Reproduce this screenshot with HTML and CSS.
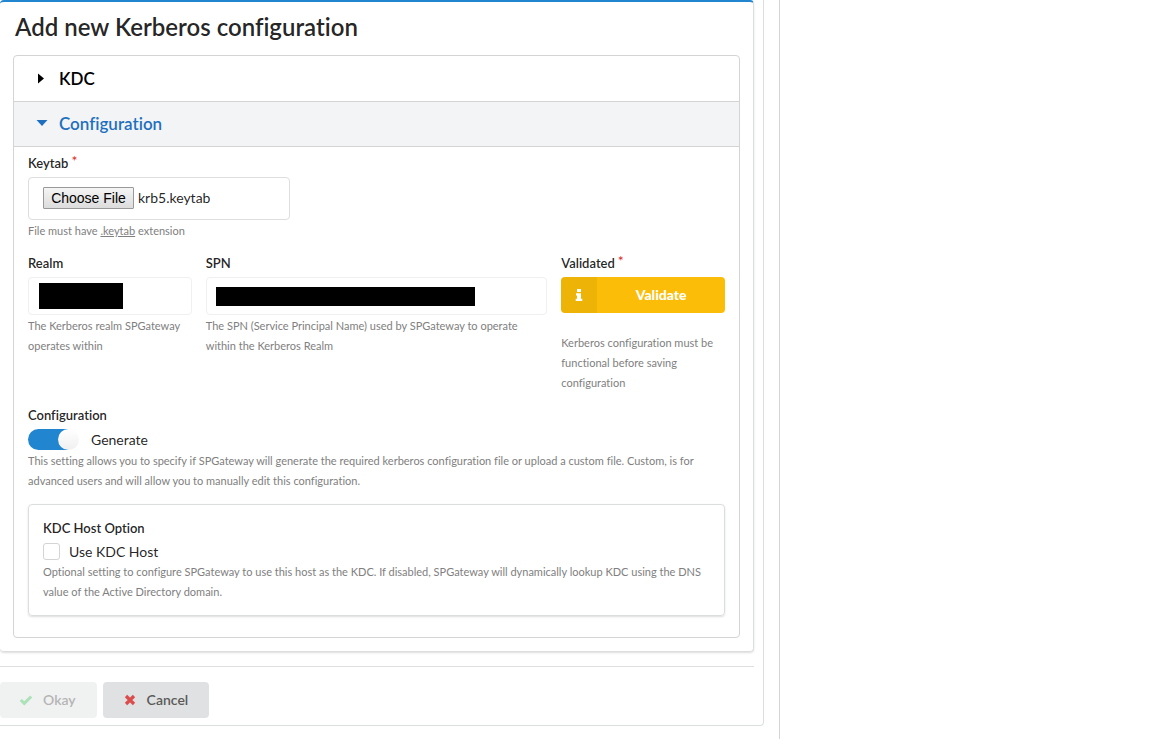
FILE: index.html
```html
<!DOCTYPE html>
<html lang="en">
<head>
<meta charset="utf-8">
<title>Add new Kerberos configuration</title>
<link rel="stylesheet" href="styles.css">
</head>
<body>
<div class="page">
  <main class="pane">
    <form class="outer">
      <section class="card">
        <h1 class="title">Add new Kerberos configuration</h1>
        <div class="accordion">
          <button type="button" class="acc-head">
            <svg class="caret" viewBox="0 0 12 12" aria-hidden="true"><path d="M2 0.5L8 5.5L2 10.5Z" fill="currentColor"/></svg>
            KDC
          </button>
          <button type="button" class="acc-head active" aria-expanded="true">
            <svg class="caret" viewBox="0 0 12 12" aria-hidden="true"><path d="M0.5 3H11.5L6 9Z" fill="currentColor"/></svg>
            Configuration
          </button>
          <div class="acc-body">
            <div class="field">
              <label class="label required" for="keytab">Keytab</label>
              <div class="file-box">
                <input class="file" type="file" id="keytab" accept=".keytab">
                <span class="file-name">krb5.keytab</span>
              </div>
              <p class="help">File must have <u>.keytab</u> extension</p>
            </div>

            <div class="columns">
              <div class="col">
                <label class="label" for="realm">Realm</label>
                <div class="masked">
                  <input class="text" type="text" id="realm" disabled>
                  <span class="mask mask-realm"></span>
                </div>
                <p class="help">The Kerberos realm SPGateway operates within</p>
              </div>
              <div class="col wide">
                <label class="label" for="spn">SPN</label>
                <div class="masked">
                  <input class="text" type="text" id="spn" disabled>
                  <span class="mask mask-spn"></span>
                </div>
                <p class="help">The SPN (Service Principal Name) used by SPGateway to operate within the Kerberos Realm</p>
              </div>
              <div class="col">
                <label class="label required" for="validate">Validated</label>
                <button type="button" class="validate" id="validate">
                  <span class="validate-icon"><svg viewBox="0 0 8 12" aria-hidden="true"><path d="M2 0H6V3H2ZM1 4.2H6V9.8H7.3V12H0.7V9.8H2V6.4H1Z" fill="currentColor"/></svg></span>
                  <span class="validate-text">Validate</span>
                </button>
                <p class="help spaced">Kerberos configuration must be functional before saving configuration</p>
              </div>
            </div>

            <div class="field">
              <span class="label">Configuration</span>
              <div class="choice">
                <input class="toggle" type="checkbox" id="generate" checked>
                <label class="choice-label" for="generate">Generate</label>
              </div>
              <p class="help">This setting allows you to specify if SPGateway will generate the required kerberos configuration file or upload a custom file. Custom, is for advanced users and will allow you to manually edit this configuration.</p>
            </div>

            <div class="option">
              <span class="label">KDC Host Option</span>
              <div class="choice small">
                <input class="check" type="checkbox" id="host">
                <label class="choice-label" for="host">Use KDC Host</label>
              </div>
              <p class="help">Optional setting to configure SPGateway to use this host as the KDC. If disabled, SPGateway will dynamically lookup KDC using the DNS value of the Active Directory domain.</p>
            </div>
          </div>
        </div>
      </section>
      <div class="actions">
        <button type="submit" class="btn okay" disabled>
          <svg viewBox="0 0 14 12" aria-hidden="true"><path d="M1.8 6L5.3 9.4L12.2 2.5" fill="none" stroke="#21ba45" stroke-width="3"/></svg>
          Okay
        </button>
        <button type="button" class="btn">
          <svg viewBox="0 0 14 12" aria-hidden="true"><path d="M3 2L11 10M11 2L3 10" fill="none" stroke="#db2828" stroke-width="3.2"/></svg>
          Cancel
        </button>
      </div>
    </form>
  </main>
</div>
</body>
</html>
```
FILE: styles.css
```css
* { box-sizing: border-box; }

body {
  margin: 0;
  background: #fff;
  color: rgba(0, 0, 0, 0.87);
  font: 14px/20px Lato, "Liberation Sans", sans-serif;
  font-variant-ligatures: none;
}

button, input { font-family: inherit; }

.page {
  display: grid;
  grid-template-columns: 65fr 31fr;
  min-height: 100vh;
}

.pane {
  border-right: 1px solid #d4d4d5;
  padding-right: 15px;
}

.outer {
  border: solid #dcdddd;
  border-width: 0 1px 1px 0;
  border-radius: 0 0 4px 0;
  padding: 0 9px 7px 0;
}

.card {
  border: 1px solid #dcdddd;
  border-left: 0;
  border-top: 2px solid #2185d0;
  border-radius: 4px;
  box-shadow: 0 1px 2px rgba(34, 36, 38, 0.15);
  padding: 10px 13px 13px;
}

.title {
  margin: 0 0 13px 2px;
  font-size: 24px;
  line-height: 30px;
  font-weight: 600;
}

.accordion {
  border: 1px solid #d4d4d5;
  border-radius: 4px;
}

.acc-head {
  display: flex;
  align-items: center;
  gap: 11px;
  width: 100%;
  height: 45px;
  padding: 0 22px;
  border: 0;
  border-radius: 4px 4px 0 0;
  background: none;
  color: #000;
  font-size: 17px;
  font-weight: 600;
  font-variant-ligatures: none;
  text-align: left;
}

.acc-head.active {
  height: 46px;
  border: solid #d4d4d5;
  border-width: 1px 0;
  border-radius: 0;
  padding-bottom: 2px;
  background: #f3f4f5;
  color: #1e70bf;
}

.caret {
  width: 12px;
  height: 12px;
}

.acc-body { padding: 6px 14px 21px; }

.label {
  display: block;
  height: 24px;
  font-size: 13px;
  font-weight: 600;
}

.required::after {
  content: "*";
  margin-left: 3px;
  color: #db2828;
  font-size: 14px;
  font-weight: 400;
  vertical-align: top;
  line-height: 16px;
}

.help {
  margin: 1px 0 0;
  color: #808080;
  font-size: 11px;
}

.file-box {
  display: flex;
  align-items: center;
  gap: 4px;
  width: 262px;
  height: 43px;
  padding: 0 14px 2px;
  border: 1px solid #dedede;
  border-radius: 4px;
}

.file {
  width: 91px;
  color: transparent;
  font-size: 14px;
}

.file::file-selector-button {
  width: 91px;
  height: 22px;
  margin: 0;
  padding: 0;
  border: 1px solid #999;
  border-radius: 1px;
  background: linear-gradient(#f5f5f5, #dcdcdc);
  color: #000;
  font: 14px "Liberation Sans", sans-serif;
}

.columns {
  display: flex;
  margin: 12px -7px;
}

.col {
  flex: 1 1 25%;
  padding: 0 7px;
}

.col.wide { flex-basis: 50%; }

.masked { position: relative; }

.text {
  display: block;
  width: 100%;
  height: 38px;
  padding: 0 14px;
  border: 1px solid #f0f0f1;
  border-radius: 4px;
  background: #fff;
}

.mask {
  position: absolute;
  background: #000;
}

.mask-realm {
  left: 11px;
  top: 6px;
  width: 84px;
  height: 26px;
}

.mask-spn {
  left: 10px;
  top: 10px;
  width: 259px;
  height: 19px;
}

.validate {
  display: flex;
  width: 100%;
  height: 36px;
  padding: 0;
  overflow: hidden;
  border: 0;
  border-radius: 4px;
  background: #fbbd08;
  color: #fff;
  font-size: 14px;
  font-weight: 900;
}

.validate-icon {
  display: flex;
  align-items: center;
  justify-content: center;
  width: 36px;
  height: 36px;
  background: rgba(0, 0, 0, 0.05);
}

.validate-icon svg { width: 8px; height: 12px; }

.validate-text {
  flex: 1;
  line-height: 36px;
}

.help.spaced { margin-top: 20px; }

.choice {
  display: flex;
  align-items: center;
  gap: 14px;
  height: 21px;
}

.choice.small {
  gap: 9px;
  height: 19px;
}

.choice-label { font-size: 14px; }

.toggle {
  appearance: none;
  width: 49px;
  height: 21px;
  margin: 0;
  border-radius: 11px;
  background: linear-gradient(90deg, #2185d0 40px, #fff 40px);
}

.toggle::before {
  content: "";
  display: block;
  width: 21px;
  height: 21px;
  margin-left: 30px;
  border-radius: 50%;
  background: linear-gradient(#fff, #f0f0f0);
}

.check {
  appearance: none;
  width: 17px;
  height: 17px;
  margin: 0;
  border: 1px solid #d4d4d5;
  border-radius: 3px;
  background: #fff;
}

.option {
  margin-top: 13px;
  padding: 13px 14px;
  border: 1px solid #dcdddd;
  border-radius: 4px;
  box-shadow: 0 1px 2px rgba(34, 36, 38, 0.15);
}

.actions {
  display: flex;
  gap: 6px;
  margin-top: 14px;
  padding-top: 15px;
  border-top: 1px solid #dedede;
}

.btn {
  display: flex;
  align-items: center;
  gap: 10px;
  height: 36px;
  padding: 0 21px 1px 20px;
  border: 0;
  border-radius: 4px;
  background: #e0e1e2;
  color: #5a5a5a;
  font-size: 14px;
  font-weight: 600;
}

.btn svg {
  width: 14px;
  height: 12px;
  opacity: 0.8;
}

.okay {
  padding-left: 19px;
  opacity: 0.45;
}
```
